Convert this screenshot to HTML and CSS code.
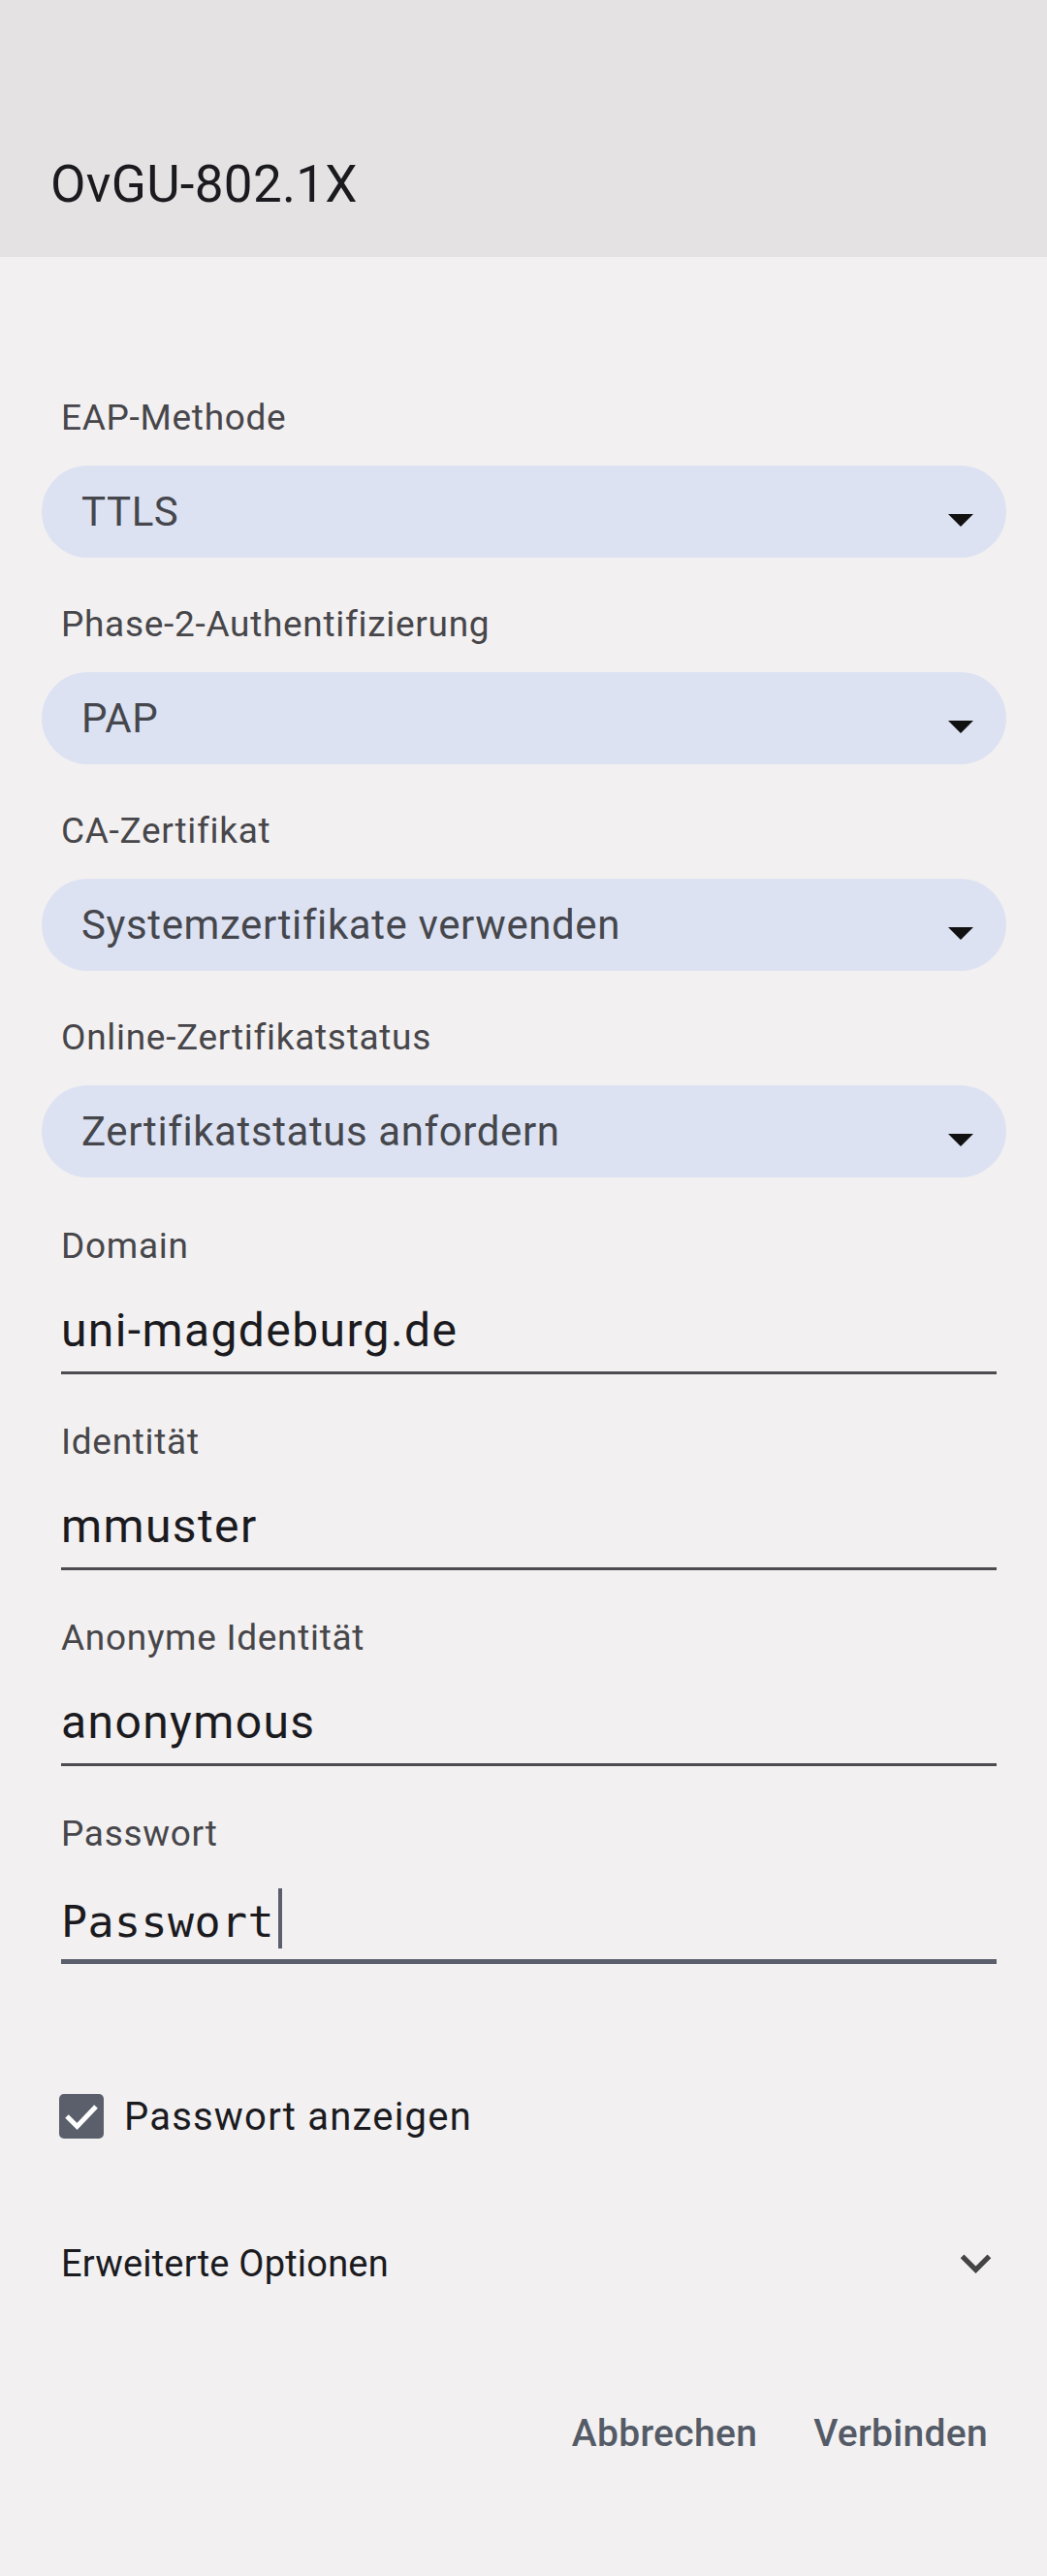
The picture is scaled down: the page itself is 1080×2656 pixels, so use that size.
FILE: index.html
```html
<!DOCTYPE html>
<html lang="de">
<head>
    <meta charset="UTF-8">
    <meta name="viewport" content="width=device-width, initial-scale=1.0">
    <title>OvGU-802.1X</title>
    <link rel="stylesheet" href="styles.css">
</head>
<body>
    <header class="titlebar">
        <h1 class="title">OvGU-802.1X</h1>
    </header>

    <main class="form">
        <div class="select-field first">
            <div class="label">EAP-Methode</div>
            <div class="select">
                <span>TTLS</span>
                <svg class="caret" width="26" height="13" viewBox="0 0 26 13"><polygon points="0,0 26,0 13,13"/></svg>
            </div>
        </div>

        <div class="select-field">
            <div class="label">Phase-2-Authentifizierung</div>
            <div class="select">
                <span>PAP</span>
                <svg class="caret" width="26" height="13" viewBox="0 0 26 13"><polygon points="0,0 26,0 13,13"/></svg>
            </div>
        </div>

        <div class="select-field">
            <div class="label">CA-Zertifikat</div>
            <div class="select">
                <span>Systemzertifikate verwenden</span>
                <svg class="caret" width="26" height="13" viewBox="0 0 26 13"><polygon points="0,0 26,0 13,13"/></svg>
            </div>
        </div>

        <div class="select-field">
            <div class="label">Online-Zertifikatstatus</div>
            <div class="select">
                <span>Zertifikatstatus anfordern</span>
                <svg class="caret" width="26" height="13" viewBox="0 0 26 13"><polygon points="0,0 26,0 13,13"/></svg>
            </div>
        </div>

        <div class="text-field first">
            <div class="label">Domain</div>
            <div class="value">uni-magdeburg.de</div>
        </div>

        <div class="text-field">
            <div class="label">Identität</div>
            <div class="value">mmuster</div>
        </div>

        <div class="text-field">
            <div class="label">Anonyme Identität</div>
            <div class="value">anonymous</div>
        </div>

        <div class="text-field focused">
            <div class="label">Passwort</div>
            <div class="value password">Passwort<span class="cursor"></span></div>
        </div>

        <div class="check-row">
            <span class="box">
                <svg width="46" height="46" viewBox="0 0 46 46"><polyline points="8,23 18.5,33.5 38,13" fill="none" stroke="#fff" stroke-width="5"/></svg>
            </span>
            <span>Passwort anzeigen</span>
        </div>

        <div class="advanced">
            <span>Erweiterte Optionen</span>
            <svg width="63" height="63" viewBox="0 0 24 24"><path d="M16.59 8.59L12 13.17 7.41 8.59 6 10l6 6 6-6z" fill="#444"/></svg>
        </div>

        <div class="actions">
            <button class="text-btn">Abbrechen</button>
            <button class="text-btn">Verbinden</button>
        </div>
    </main>
</body>
</html>
```

FILE: styles.css
```css
body {
    margin: 0;
    font-family: Roboto, "Liberation Sans", sans-serif;
    background-color: #f2f0f1;
    color: #1b1b1f;
    min-height: 2656px;
}

.titlebar {
    box-sizing: border-box;
    height: 265px;
    padding: 164px 0 0 52px;
    background-color: #e4e2e3;
}

.title {
    margin: 0;
    font-size: 53px;
    line-height: 53px;
    font-weight: 400;
    letter-spacing: 0.3px;
    color: #1b1b1f;
}

.form {
    display: flex;
    flex-direction: column;
    padding: 0 42px 0 43px;
}

.label {
    padding-left: 20px;
    font-size: 37px;
    line-height: 48px;
    letter-spacing: 0.7px;
    color: #47464a;
}

/* dropdowns */
.select-field {
    margin-top: 45px;
}

.select-field.first {
    margin-top: 142px;
}

.select {
    box-sizing: border-box;
    display: flex;
    align-items: center;
    justify-content: space-between;
    height: 95px;
    margin-top: 25px;
    padding: 0 34px 0 41px;
    border-radius: 48px;
    background-color: #dde2f2;
    font-size: 42px;
    letter-spacing: 0.6px;
    color: #45474d;
}

.caret {
    margin-top: 18px;
    fill: #111;
}

/* text inputs */
.text-field {
    margin-top: 46px;
}

.text-field.first {
    margin-top: 47px;
}

.text-field .value {
    height: 64px;
    margin: 31px 10px 0 20px;
    padding-bottom: 10px;
    border-bottom: 3px solid #4d4b4f;
    font-size: 48px;
    line-height: 64px;
    letter-spacing: 1.4px;
    color: #1b1b1f;
}

.text-field .value.password {
    margin-top: 32px;
    padding-bottom: 9px;
    border-bottom: 5px solid #5a5f6b;
    font-family: "DejaVu Sans Mono", monospace;
    font-size: 45px;
    letter-spacing: 0.4px;
}

.cursor {
    display: inline-block;
    width: 4px;
    height: 62px;
    margin-left: 4px;
    vertical-align: -12px;
    background-color: #5a5f6b;
}

/* checkbox */
.check-row {
    display: flex;
    align-items: center;
    height: 48px;
    margin-top: 133px;
    padding-left: 18px;
    font-size: 40px;
    letter-spacing: 1.2px;
    color: #1b1b1f;
}

.box {
    display: flex;
    width: 46px;
    height: 46px;
    margin-right: 21px;
    border-radius: 5px;
    background-color: #5a5f6b;
}

.advanced {
    display: flex;
    align-items: center;
    justify-content: space-between;
    height: 63px;
    margin-top: 96px;
    padding-left: 20px;
    font-size: 38px;
    letter-spacing: 0.2px;
    color: #1b1b1f;
}

.actions {
    display: flex;
    justify-content: flex-end;
    gap: 58px;
    margin-top: 120px;
    padding-right: 19px;
}

.text-btn {
    padding: 0;
    border: 0;
    background: none;
    font-family: Roboto, "Liberation Sans", sans-serif;
    font-size: 39px;
    font-weight: 500;
    line-height: 48px;
    letter-spacing: 0.3px;
    color: #545b67;
}
```
